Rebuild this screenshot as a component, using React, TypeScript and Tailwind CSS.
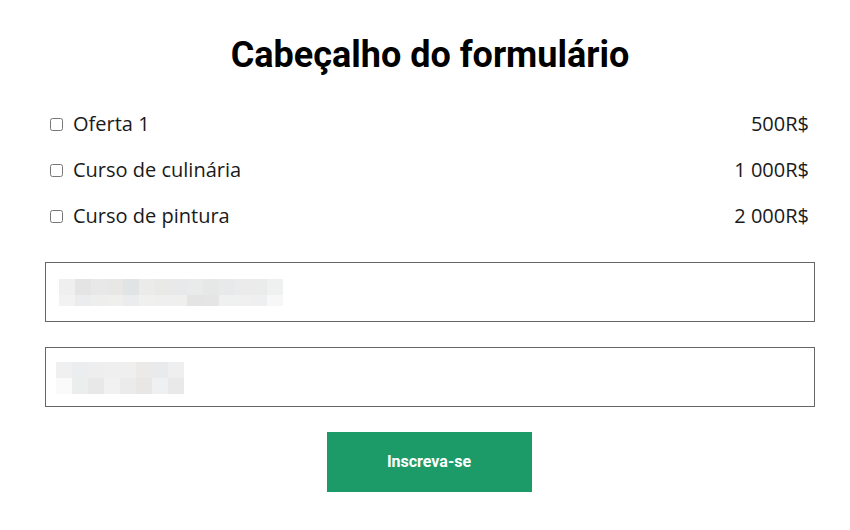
import React from "react";

const mosaic1Row1 = [
  "bg-[#efefef]", "bg-[#e4e4e4]", "bg-[#e8e8e8]", "bg-[#e9e7e6]", "bg-[#e1e4e5]", "bg-[#ebebe9]", "bg-[#e9e9e7]",
  "bg-[#e8e9eb]", "bg-[#e9eaea]", "bg-[#e6e7e7]", "bg-[#e8e9eb]", "bg-[#ebebeb]", "bg-[#eaebeb]", "bg-[#eff0f0]",
];
const mosaic1Row2 = [
  "bg-[#f2f2f2]", "bg-[#ebeced]", "bg-[#eeeeed]", "bg-[#efefed]", "bg-[#ebeced]", "bg-[#f0f0ef]", "bg-[#efefef]",
  "bg-[#efefee]", "bg-[#e4e4e4]", "bg-[#e5e5e5]", "bg-[#eff0f0]", "bg-[#f0f0f0]", "bg-[#eeeff0]", "bg-[#f7f7f7]",
];
const mosaic2Row1 = [
  "bg-[#f1f0f0]", "bg-[#ebedee]", "bg-[#eeeeee]", "bg-[#efefef]", "bg-[#f0eff0]", "bg-[#ebeae8]", "bg-[#e9eaeb]", "bg-[#efefef]",
];
const mosaic2Row2 = [
  "bg-[#fafafa]", "bg-[#eceded]", "bg-[#e8e8e8]", "bg-[#f1f1f2]", "bg-[#ebebeb]", "bg-[#e8e7e6]", "bg-[#eff0f2]", "bg-[#e9e9e9]",
];

const items = [
  { label: "Oferta 1", price: "500R$" },
  { label: "Curso de culinária", price: "1 000R$" },
  { label: "Curso de pintura", price: "2 000R$" },
];

export default function App() {
  return (
    <div className="w-[850px] h-[530px] bg-white overflow-hidden">
      <div className="ml-[45px] w-[770px] pt-[35px]">
        <h1
          className="text-center text-[36px] leading-[40px] font-bold text-black"
          style={{ fontFamily: "Roboto, sans-serif" }}
        >
          Cabeçalho do formulário
        </h1>

        <div className="mt-[26px] pl-[5px] pr-[6px]" style={{ fontFamily: "'Open Sans', sans-serif" }}>
          {items.map((it) => (
            <div key={it.label} className="flex h-[46px] items-center justify-between text-[20px] text-[#1a1a1a]">
              <label className="flex items-center">
                <input type="checkbox" className="m-0 h-[13px] w-[13px]" />
                <span className="ml-[10px]">{it.label}</span>
              </label>
              <span>{it.price}</span>
            </div>
          ))}
        </div>

        <div className="mt-[23px] h-[60px] border border-[#666666] pl-[13px] pt-[16px]">
          <div className="flex">
            {mosaic1Row1.map((c, i) => (
              <div key={i} className={`h-[16px] w-[16px] ${c}`} />
            ))}
          </div>
          <div className="flex">
            {mosaic1Row2.map((c, i) => (
              <div key={i} className={`h-[11px] w-[16px] ${c}`} />
            ))}
          </div>
        </div>

        <div className="mt-[25px] h-[60px] border border-[#666666] pl-[10px] pt-[14px]">
          <div className="flex">
            {mosaic2Row1.map((c, i) => (
              <div key={i} className={`h-[16px] w-[16px] ${c}`} />
            ))}
          </div>
          <div className="flex">
            {mosaic2Row2.map((c, i) => (
              <div key={i} className={`h-[16px] w-[16px] ${c}`} />
            ))}
          </div>
        </div>

        <div className="mt-[25px] flex justify-center pr-[2px]">
          <button
            className="h-[60px] w-[205px] bg-[#1c9b69] text-[16px] font-bold text-white"
            style={{ fontFamily: "Roboto, sans-serif" }}
          >
            Inscreva-se
          </button>
        </div>
      </div>
    </div>
  );
}
